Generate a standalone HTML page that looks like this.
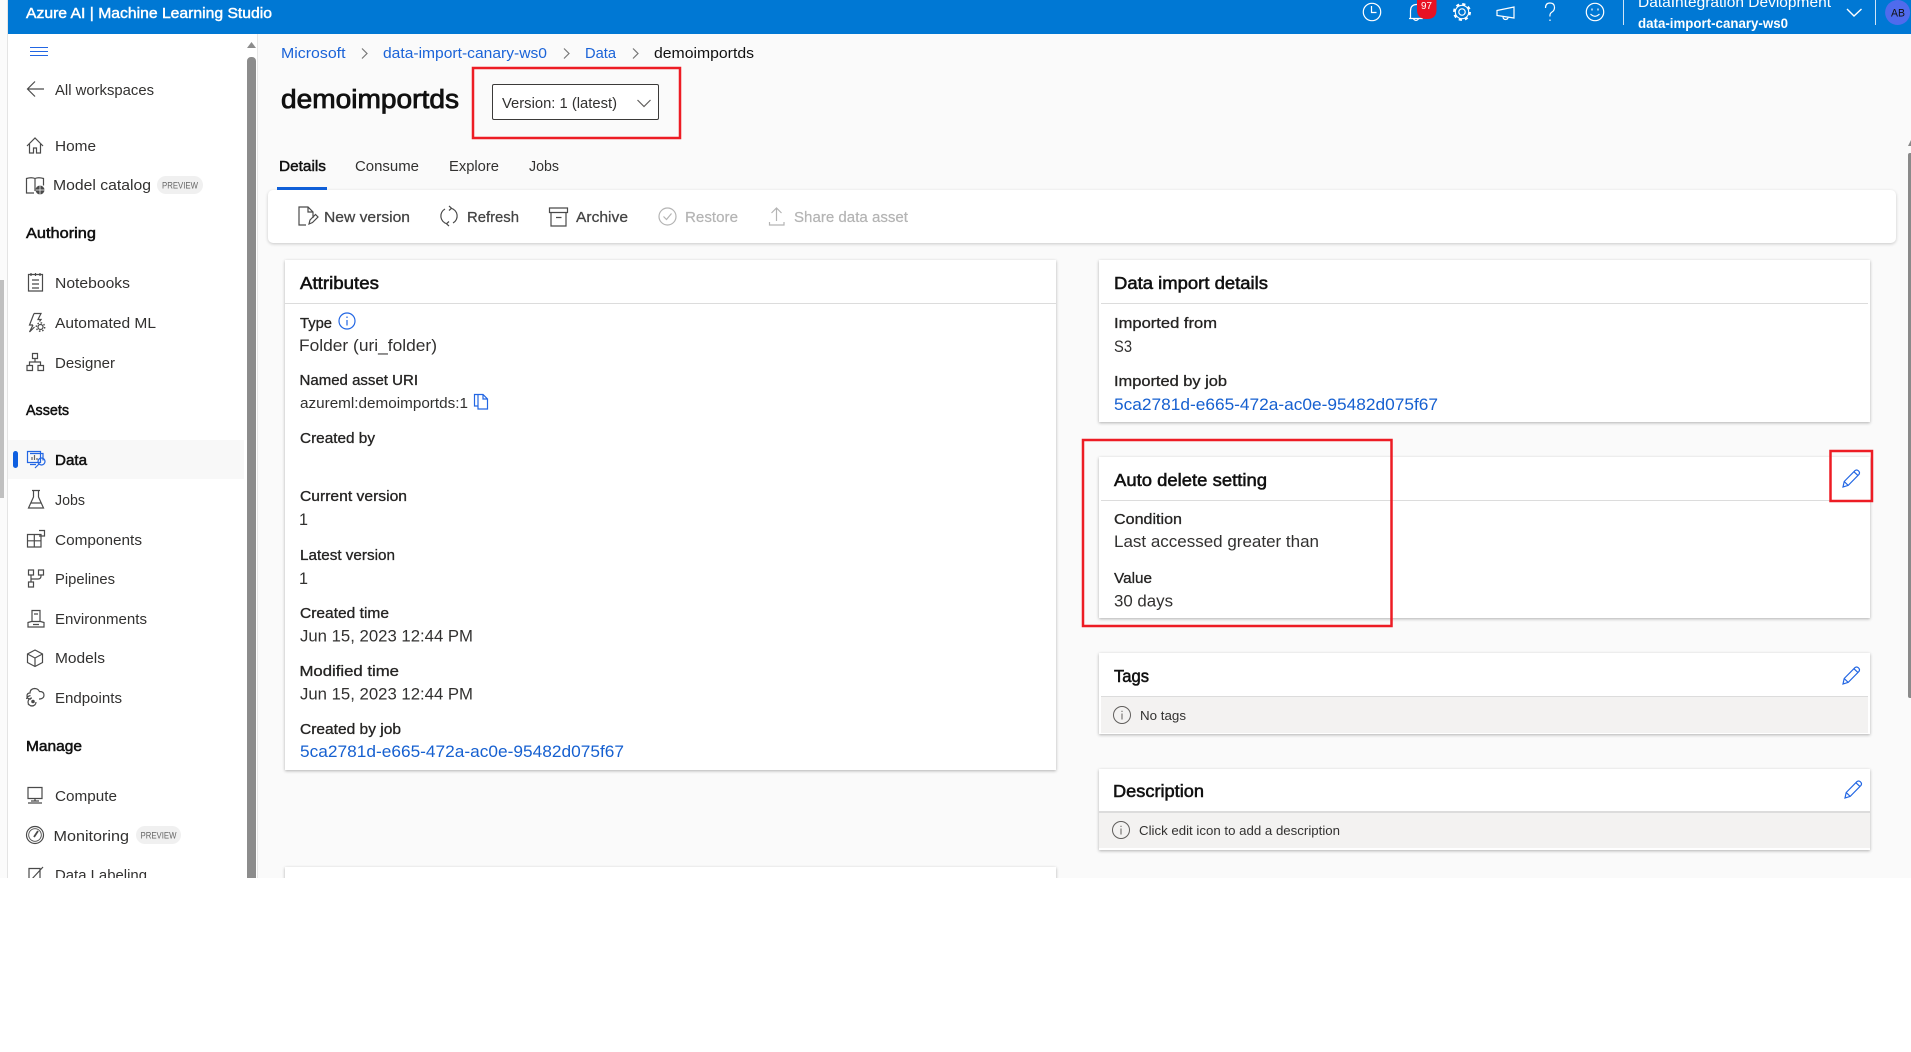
<!DOCTYPE html>
<html lang="en">
<head>
<meta charset="utf-8">
<title>demoimportds - Azure AI | Machine Learning Studio</title>
<style>
html,body{margin:0;padding:0;width:1911px;height:1052px;overflow:hidden;background:#fff;font-family:"Liberation Sans",sans-serif}
.b{position:absolute;box-sizing:border-box}
#top{left:8px;top:0;width:1903px;height:34px;background:#0078d4}
#strip{left:0;top:0;width:8px;height:878px;background:#fbfbfb;border-right:1px solid #e4e4e4}
#stripbar{left:0;top:280px;width:4px;height:218px;background:#c0c0c0}
#nav{left:8px;top:34px;width:250px;height:844px;background:#fff;border-right:1px solid #e6e6e6}
#main{left:258px;top:34px;width:1653px;height:844px;background:#fafafa}
#sel{left:8px;top:440px;width:236px;height:39px;background:#f8f8f8}
#ind{left:13px;top:451px;width:5px;height:17px;background:#0f5fe0;border-radius:3px}
#navbar{left:247px;top:57px;width:9px;height:821px;background:#8c8c8c;border-radius:4px 4px 0 0}
#rbar{left:1908px;top:153px;width:3px;height:545px;background:#8a8a8a;border-radius:2px 0 0 2px}
.card{background:#fff;box-shadow:0 1px 3px rgba(0,0,0,.3)}
.hr{height:1.5px;background:#dcdcdc}
.grey{background:#f3f2f1}
#tb{left:268px;top:190px;width:1628px;height:53px;background:#fff;border-radius:5px;box-shadow:0 1px 3px rgba(0,0,0,.2)}
#tabline{left:277px;top:187px;width:50px;height:2.5px;background:#0f5fd8}
#ver{left:492px;top:84px;width:167px;height:36px;background:#fff;border:1px solid #3b3a39;border-radius:2px}
#clip{left:0;top:878px;width:1911px;height:174px;background:#fff}
svg{position:absolute;left:0;top:0}
text{font-family:"Liberation Sans",sans-serif;white-space:pre}
.n{font-size:14.6px;fill:#323130}
.w{font-size:14.6px;fill:#fff}
.s{font-size:14.6px;fill:#111;stroke:#111;stroke-width:.5px}
.l{font-size:14.6px;fill:#252423;stroke:#252423;stroke-width:.3px}
.v{font-size:17px;fill:#323130}
.u{font-size:15px;fill:#323130}
.h{font-size:17.5px;fill:#111;stroke:#111;stroke-width:.55px}
.a{font-size:17px;fill:#1660d0}
.c{font-size:14.6px;fill:#1a63d8}
.g{font-size:14.6px;fill:#b4b4b4;stroke:#b4b4b4;stroke-width:.2px}
.t{font-size:14.6px;fill:#444;stroke:#444;stroke-width:.25px}
.i{fill:none;stroke:#4a4a4a;stroke-width:1.2}
.wi{fill:none;stroke:#fff;stroke-width:1.2}
.bi{fill:none;stroke:#2266e3;stroke-width:1.2}
.gi{fill:none;stroke:#b4b4b4;stroke-width:1.2}
</style>
</head>
<body>
<div class="b" id="main"></div>
<div class="b" id="strip"></div>
<div class="b" id="stripbar"></div>
<div class="b" id="nav"></div>
<div class="b" id="sel"></div>
<div class="b" id="ind"></div>
<div class="b" id="navbar"></div>
<div class="b" id="rbar"></div>
<div class="b" id="top"></div>
<div class="b" id="ver"></div>
<div class="b" id="tb"></div>
<div class="b" id="tabline"></div>

<div class="b card" style="left:285px;top:260px;width:771px;height:510px"><div class="b hr" style="left:0;top:42.5px;width:771px"></div></div>
<div class="b card" style="left:285px;top:867px;width:771px;height:40px"></div>

<div class="b card" style="left:1099px;top:260px;width:771px;height:162px"><div class="b hr" style="left:2px;top:42.5px;width:767px"></div></div>
<div class="b card" style="left:1099px;top:457px;width:771px;height:161px"><div class="b hr" style="left:2px;top:42.5px;width:767px"></div></div>
<div class="b card" style="left:1099px;top:653px;width:771px;height:81px"><div class="b hr" style="left:2px;top:42.5px;width:767px"></div><div class="b grey" style="left:2px;top:44px;width:767px;height:36px"></div></div>
<div class="b card" style="left:1099px;top:769px;width:771px;height:81px"><div class="b hr" style="left:0;top:42px;width:771px"></div><div class="b grey" style="left:0;top:43.5px;width:771px;height:35.5px"></div></div>

<svg width="1911" height="1052" viewBox="0 0 1911 1052" xmlns="http://www.w3.org/2000/svg">
<defs>
<g id="pen"><path class="bi" d="M1 18l1.2-5.5L13 1.6q1.6-1.3 3.400.2t.6 3.6L6.200 16.400z M2.200 12.500l4 3.900 M12 2.800l4 3.800"/></g>
<g id="inf"><circle fill="none" stroke="#605e5c" stroke-width="1" cx="0" cy="0" r="8.500"/><path fill="none" stroke="#605e5c" stroke-width="1" d="M0-1.500V4.500 M0-4.200v1.200"/></g>
</defs>

<!-- header -->
<text class="w" x="26" y="18" textLength="246" lengthAdjust="spacingAndGlyphs" style="stroke:#fff;stroke-width:.45px">Azure AI | Machine Learning Studio</text>
<circle class="wi" cx="1372" cy="12" r="8.700"/><path class="wi" d="M1371.500 6v6.500h5"/>
<path class="wi" d="M1409 18.500h14 M1410.500 18V11q0-6 5.500-6.500t5.500 6.500v7 M1413.500 19q2.500 3 5 0"/>
<path d="M1417 0h19.500v10q0 9-9.700 9t-9.800-9z" fill="#e81123"/>
<text x="1421" y="9" font-size="10.500" fill="#fff" textLength="11" lengthAdjust="spacingAndGlyphs">97</text>
<circle class="wi" cx="1462" cy="12" r="3.200"/><circle cx="1462" cy="12" r="6.700" fill="none" stroke="#fff" stroke-width="1.100"/><circle cx="1462" cy="12" r="8" fill="none" stroke="#fff" stroke-width="2" stroke-dasharray="3.200 3.080"/>
<path class="wi" d="M1497 10.500l17-3.500v11l-17-2.500z M1503 16.500q0 3 2.500 3t2.500-2.500"/>
<path class="wi" d="M1545.500 8q0-5 4.500-5t4.500 4.500q0 3-2.500 4.500t-2 4.500 M1550 19.500v1.500"/>
<circle class="wi" cx="1595" cy="12" r="8.700"/><path class="wi" d="M1590.500 14q4.500 4.500 9 0 M1592 8.500v2 M1598 8.500v2"/>
<path d="M1623.500 0v25 M1875.500 0v25" stroke="#cfe4f6" stroke-width="1"/>
<text class="w" x="1638" y="7" textLength="193" lengthAdjust="spacingAndGlyphs">DataIntegration Devlopment</text>
<text class="w" x="1638" y="28" textLength="150" lengthAdjust="spacingAndGlyphs" style="font-weight:700;font-size:13.500px">data-import-canary-ws0</text>
<path class="wi" style="stroke-width:1.400" d="M1847 9l7 7 7.500-7"/>
<circle cx="1897.600" cy="12.500" r="12.500" fill="#4f6bed"/>
<text x="1891" y="16.500" font-size="11" fill="#111" textLength="14" lengthAdjust="spacingAndGlyphs">AB</text>

<!-- sidebar -->
<path d="M30 47.500h18 M30 51.500h18 M30 55.500h18" stroke="#2266e3" stroke-width="1" fill="none"/>
<path d="M247 48l4.500-6 4.500 6z" fill="#8c8c8c"/>
<path class="i" d="M44 89H27.500 M35 81.500l-7.500 7.500 7.500 7.500"/>
<text class="n" x="55" y="95" textLength="99" lengthAdjust="spacingAndGlyphs">All workspaces</text>
<path class="i" d="M27 146l8-8 8 8 M29.500 144v9h4v-5h3v5h4v-9"/>
<text class="n" x="55" y="151" textLength="41" lengthAdjust="spacingAndGlyphs">Home</text>
<path class="i" d="M34 193h-7.500v-14.500q5-1.500 8.500 0 3.500-1.500 8.500 0v7 M35 178.500V191"/><circle cx="40" cy="190" r="4.500" fill="#4a4a4a"/><path d="M40 185.500v9 M35.500 190h9" stroke="#fff" stroke-width=".7"/>
<text class="n" x="53" y="190" textLength="98" lengthAdjust="spacingAndGlyphs">Model catalog</text>
<rect x="157" y="176" width="46" height="18" rx="9" fill="#f0f0f0"/>
<text x="162" y="188.500" font-size="9" fill="#666" textLength="36" lengthAdjust="spacingAndGlyphs">PREVIEW</text>
<text class="s" x="26" y="238" textLength="70" lengthAdjust="spacingAndGlyphs">Authoring</text>
<path class="i" d="M28.500 274.500h14v16.500h-14z M31 273v3 M35.500 273v3 M40 273v3 M32 280h7 M32 284h7 M32 288h7"/>
<text class="n" x="55" y="288" textLength="75" lengthAdjust="spacingAndGlyphs">Notebooks</text>
<path class="i" d="M34 313.500h7l-3 6h3l-1.500 2 M33 325h-3.500l4.500-11.500 M33 325l-3.500 7 5-5"/><circle cx="40.500" cy="327" r="2.500" class="i"/><circle cx="40.500" cy="327" r="4.200" fill="none" stroke="#4a4a4a" stroke-width="1.400" stroke-dasharray="1.500 1.800"/>
<text class="n" x="55" y="328" textLength="101" lengthAdjust="spacingAndGlyphs">Automated ML</text>
<path class="i" d="M32.500 353.500h5v5h-5z M27 365.500h5.500v5H27z M38 365.500h5.500v5H38z M35 358.500v3.500 M29.500 365.500V362h11v3.500"/>
<text class="n" x="55" y="368" textLength="60" lengthAdjust="spacingAndGlyphs">Designer</text>
<text class="s" x="26" y="415" textLength="43" lengthAdjust="spacingAndGlyphs">Assets</text>
<path class="bi" d="M30 453.500h13v7 M27.500 451.500h13v11h-13z M30 464.500h6"/><path d="M32 460v-3 M34.500 460v-5 M37 460v-2" stroke="#666" stroke-width="1.200"/><circle cx="41.500" cy="461.500" r="3.500" class="bi"/><path class="bi" d="M39 464l-4 4"/>
<text class="s" x="55" y="465" textLength="32" lengthAdjust="spacingAndGlyphs">Data</text>
<path class="i" d="M32 490.500h8 M33.500 491v6l-5 11h15l-5-11v-6 M31 503h10"/>
<text class="n" x="55" y="505" textLength="30" lengthAdjust="spacingAndGlyphs">Jobs</text>
<path class="i" d="M27.500 534.500h13.500v12.500H27.500z M34.300 534.500V547 M27.500 540.800h13.500 M39 530.500h5.500v5.500H39"/>
<text class="n" x="55" y="545" textLength="87" lengthAdjust="spacingAndGlyphs">Components</text>
<path class="i" d="M28.500 570h5v5h-5z M38.500 570h5v5h-5z M28.500 582h5v5h-5z M31 575v7 M41 575v1q0 3-3 3h-7"/>
<text class="n" x="55" y="584" textLength="60" lengthAdjust="spacingAndGlyphs">Pipelines</text>
<path class="i" d="M32 610.500h8v11h-8z M34 614h4 M28 627v-4.500l3.500-1h9l3.500 1v4.500z M33 624.500h6"/>
<text class="n" x="55" y="624" textLength="92" lengthAdjust="spacingAndGlyphs">Environments</text>
<path class="i" d="M35 650l7.500 4v8.500l-7.500 4-7.500-4V654z M27.500 654l7.500 4 7.500-4 M35 658v8.500"/>
<text class="n" x="55" y="663" textLength="50" lengthAdjust="spacingAndGlyphs">Models</text>
<path class="i" d="M31 699h-1q-3 0-3-3t3-3q0-4 4.500-4.500 3.500 0 5 3 4.500 0 4.500 3.500t-4 4h-1 M26.500 699q1-3 4-3.500 M36 702a4 4 0 1 1-4-4 M28 704q3 3 7 1"/><circle cx="33" cy="701.500" r="1.800" fill="#4a4a4a"/>
<text class="n" x="55" y="703" textLength="67" lengthAdjust="spacingAndGlyphs">Endpoints</text>
<text class="s" x="26" y="751" textLength="56" lengthAdjust="spacingAndGlyphs">Manage</text>
<path class="i" d="M28 787.500h14v11H28z M35 798.500v2.500 M31 801h8 M28 803h14"/>
<text class="n" x="55" y="801" textLength="62" lengthAdjust="spacingAndGlyphs">Compute</text>
<circle cx="35" cy="835" r="8.500" class="i"/><circle cx="35" cy="835" r="6.300" fill="none" stroke="#4a4a4a" stroke-width=".9"/><path d="M34 837l4-6" stroke="#4a4a4a" stroke-width="1.800"/>
<text class="n" x="53.500" y="841" textLength="75.500" lengthAdjust="spacingAndGlyphs">Monitoring</text>
<rect x="136" y="826" width="45" height="18" rx="9" fill="#f0f0f0"/>
<text x="140.500" y="838.500" font-size="9" fill="#666" textLength="36" lengthAdjust="spacingAndGlyphs">PREVIEW</text>
<path class="i" d="M29 868.500h11v12H29z M31 880l12-13"/>
<text class="n" x="55" y="880" textLength="92" lengthAdjust="spacingAndGlyphs">Data Labeling</text>

<!-- breadcrumb / title -->
<text class="c" x="281" y="58" textLength="64.500" lengthAdjust="spacingAndGlyphs">Microsoft</text>
<path class="i" d="M362 48.500l5 5-5 5 M564 48.500l5 5-5 5 M633 48.500l5 5-5 5" style="stroke:#777"/>
<text class="c" x="383" y="58" textLength="164" lengthAdjust="spacingAndGlyphs">data-import-canary-ws0</text>
<text class="c" x="585" y="58" textLength="31" lengthAdjust="spacingAndGlyphs">Data</text>
<text class="n" x="654" y="58" textLength="100" lengthAdjust="spacingAndGlyphs" style="fill:#111">demoimportds</text>
<text x="281" y="108" font-size="25.500" fill="#111" stroke="#111" stroke-width=".8" textLength="178" lengthAdjust="spacingAndGlyphs">demoimportds</text>
<text class="n" x="502" y="108" textLength="115" lengthAdjust="spacingAndGlyphs">Version: 1 (latest)</text>
<path class="i" d="M637.500 100l6.500 6.500 6.500-6.500" style="stroke:#605e5c"/>
<text class="l" x="279" y="171" textLength="47" lengthAdjust="spacingAndGlyphs" style="stroke-width:.45px;fill:#111;stroke:#111">Details</text>
<text class="n" x="355" y="171" textLength="64" lengthAdjust="spacingAndGlyphs">Consume</text>
<text class="n" x="449" y="171" textLength="50" lengthAdjust="spacingAndGlyphs">Explore</text>
<text class="n" x="529" y="171" textLength="30" lengthAdjust="spacingAndGlyphs">Jobs</text>

<!-- toolbar -->
<path class="i" d="M306 225h-7v-18h9l5 5v6 M308 207v5h5 M309 224l1-4 5.500-5.500 2.500 2.500-5.500 5.500z"/>
<text class="t" x="324" y="222" textLength="86" lengthAdjust="spacingAndGlyphs">New version</text>
<path class="i" d="M451 208.200A8 8 0 0 1 453 223 M447 223.800A8 8 0 0 1 445 209 M449 206l2.500 2.200-2.500 2.300 M449 226l-2.500-2.200 2.500-2.300"/>
<text class="t" x="467" y="222" textLength="52" lengthAdjust="spacingAndGlyphs">Refresh</text>
<path class="i" d="M549.500 208h18v4.500h-18z M551 212.500v13.500h15v-13.500 M556 217.500h5.500"/>
<text class="t" x="576" y="222" textLength="52" lengthAdjust="spacingAndGlyphs">Archive</text>
<circle cx="667.500" cy="216.500" r="8.500" class="gi"/><path class="gi" d="M663.500 216.500l3 3 5-6"/>
<text class="g" x="685" y="222" textLength="53" lengthAdjust="spacingAndGlyphs">Restore</text>
<path class="gi" d="M776.500 221v-13 M771.500 213l5-5 5 5 M769.500 222v3h14.500v-3"/>
<text class="g" x="794" y="222" textLength="114" lengthAdjust="spacingAndGlyphs">Share data asset</text>

<!-- attributes -->
<text class="h" x="300" y="289" textLength="79" lengthAdjust="spacingAndGlyphs">Attributes</text>
<text class="l" x="300" y="328" textLength="32" lengthAdjust="spacingAndGlyphs">Type</text>
<circle cx="347" cy="321" r="8" class="bi"/><path class="bi" d="M347 320v5.500 M347 316.500v1.500"/>
<text class="v" x="299" y="351" textLength="138" lengthAdjust="spacingAndGlyphs">Folder (uri_folder)</text>
<text class="l" x="299.500" y="385" textLength="118.500" lengthAdjust="spacingAndGlyphs">Named asset URI</text>
<text class="u" x="300" y="408" textLength="168" lengthAdjust="spacingAndGlyphs">azureml:demoimportds:1</text>
<path class="bi" d="M478 394.500h-3.500v11.500h3.500 M478 394.500h5l4.500 4.500v10h-9.500z M483 394.500V399h4.500"/>
<text class="l" x="300" y="443" textLength="75" lengthAdjust="spacingAndGlyphs">Created by</text>
<text class="l" x="300" y="501" textLength="107" lengthAdjust="spacingAndGlyphs">Current version</text>
<text class="v" x="299" y="525" textLength="9" lengthAdjust="spacingAndGlyphs">1</text>
<text class="l" x="300" y="560" textLength="95" lengthAdjust="spacingAndGlyphs">Latest version</text>
<text class="v" x="299" y="584" textLength="9" lengthAdjust="spacingAndGlyphs">1</text>
<text class="l" x="300" y="618" textLength="89" lengthAdjust="spacingAndGlyphs">Created time</text>
<text class="v" x="300" y="641.500" textLength="173" lengthAdjust="spacingAndGlyphs">Jun 15, 2023 12:44 PM</text>
<text class="l" x="299.500" y="676" textLength="99.500" lengthAdjust="spacingAndGlyphs">Modified time</text>
<text class="v" x="300" y="699.500" textLength="173" lengthAdjust="spacingAndGlyphs">Jun 15, 2023 12:44 PM</text>
<text class="l" x="300" y="734" textLength="101" lengthAdjust="spacingAndGlyphs">Created by job</text>
<text class="a" x="300" y="757" textLength="324" lengthAdjust="spacingAndGlyphs">5ca2781d-e665-472a-ac0e-95482d075f67</text>

<!-- data import -->
<text class="h" x="1114" y="289" textLength="154" lengthAdjust="spacingAndGlyphs">Data import details</text>
<text class="l" x="1114" y="328" textLength="103" lengthAdjust="spacingAndGlyphs">Imported from</text>
<text class="v" x="1114" y="352" textLength="18" lengthAdjust="spacingAndGlyphs">S3</text>
<text class="l" x="1114" y="386" textLength="113" lengthAdjust="spacingAndGlyphs">Imported by job</text>
<text class="a" x="1114" y="410" textLength="324" lengthAdjust="spacingAndGlyphs">5ca2781d-e665-472a-ac0e-95482d075f67</text>

<!-- auto delete -->
<text class="h" x="1114" y="486" textLength="153" lengthAdjust="spacingAndGlyphs">Auto delete setting</text>
<text class="l" x="1114" y="524" textLength="68" lengthAdjust="spacingAndGlyphs">Condition</text>
<text class="v" x="1114" y="547" textLength="205" lengthAdjust="spacingAndGlyphs">Last accessed greater than</text>
<text class="l" x="1114" y="583" textLength="38" lengthAdjust="spacingAndGlyphs">Value</text>
<text class="v" x="1114" y="606.500" textLength="59" lengthAdjust="spacingAndGlyphs">30 days</text>
<use href="#pen" x="1842" y="469"/>

<!-- tags -->
<text class="h" x="1114" y="682" textLength="35" lengthAdjust="spacingAndGlyphs">Tags</text>
<use href="#pen" x="1842" y="666"/>
<use href="#inf" x="1122" y="715"/>
<text x="1140" y="720" font-size="13" fill="#323130" textLength="46" lengthAdjust="spacingAndGlyphs">No tags</text>

<!-- description -->
<text class="h" x="1113" y="797" textLength="91" lengthAdjust="spacingAndGlyphs">Description</text>
<use href="#pen" x="1844" y="780"/>
<use href="#inf" x="1121" y="830"/>
<text x="1139" y="835" font-size="13" fill="#323130" textLength="201" lengthAdjust="spacingAndGlyphs">Click edit icon to add a description</text>

<!-- right scrollbar arrow -->
<path d="M1908 146l3-6v6z" fill="#8a8a8a"/>

<!-- annotations -->
<g fill="none" stroke="#ed1c24" stroke-width="2.500">
<rect x="473" y="68" width="207" height="70"/>
<rect x="1083" y="440" width="308.500" height="186"/>
<rect x="1830.500" y="451" width="41.500" height="50"/>
</g>
</svg>
<div class="b" id="clip"></div>
</body>
</html>
